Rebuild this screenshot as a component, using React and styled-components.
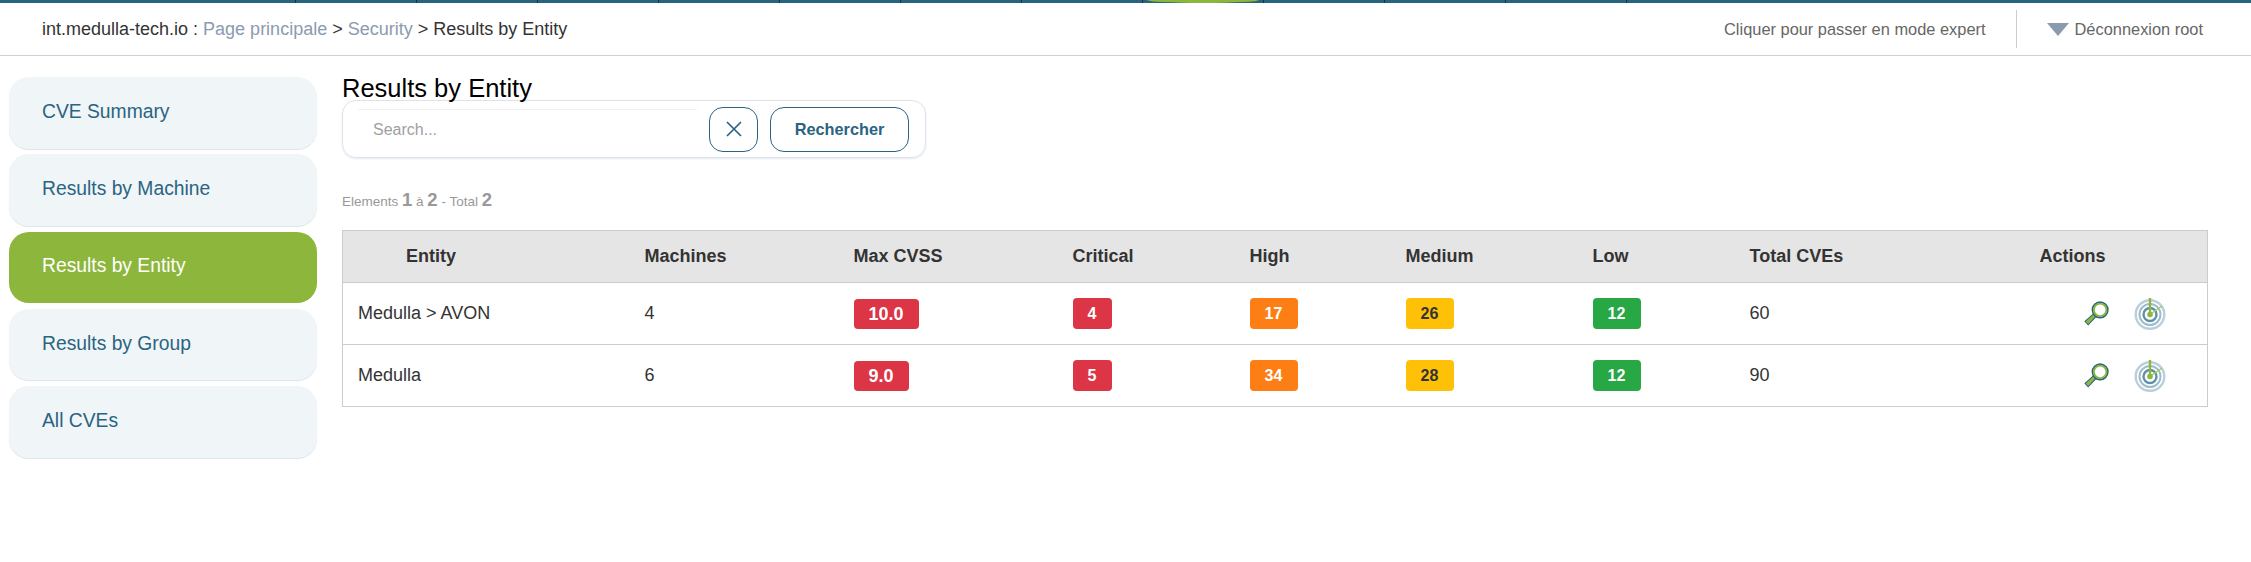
import React from "react";
import styled, { createGlobalStyle } from "styled-components";

const Global = createGlobalStyle`
  html, body { margin: 0; padding: 0; background: #fff; }
  body { font-family: "Liberation Sans", Arial, sans-serif; color: #333; }
`;

const Page = styled.div`
  width: 2251px;
  height: 562px;
  overflow: hidden;
  background: #fff;
`;
const TopBar = styled.nav`
  display: flex;
  height: 3px;
  padding-left: 295px;
  background: #28637f;
`;
const TopTab = styled.div`
  width: 121px;
  height: 3px;
  box-sizing: border-box;
  border-left: 1px solid #1c2f3a;
  display: flex;
  justify-content: center;
  &:last-child { width: 1px; }
`;
const TopPill = styled.span`
  width: 112px;
  height: 3px;
  background: #8db63c;
  border-radius: 0 0 50% 50% / 0 0 100% 100%;
`;
const Header = styled.header`
  display: flex;
  align-items: center;
  height: 53px;
  box-sizing: border-box;
  border-bottom: 1px solid #d0d0d0;
  padding: 0 48px 0 42px;
  font-size: 18px;
`;
const Crumbs = styled.div`
  flex: 1;
  color: #333;
`;
const CrumbLink = styled.a`
  color: #8b9bb0;
`;
const HeaderLink = styled.a`
  font-size: 16.4px;
  color: #666;
`;
const HeaderDivider = styled.span`
  width: 1px;
  height: 38px;
  background: #ccc;
  margin: 0 30px;
`;
const Caret = styled.span`
  width: 0;
  height: 0;
  border-left: 11px solid transparent;
  border-right: 11px solid transparent;
  border-top: 13px solid #8a9bad;
  margin-right: 6px;
`;
const Body = styled.div`
  display: flex;
  padding-top: 21px;
`;
const Sidebar = styled.aside`
  width: 308px;
  margin-left: 9px;
  margin-right: 25px;
  display: flex;
  flex-direction: column;
  gap: 5.83px;
  flex: none;
`;
const SideItem = styled.a`
  display: flex;
  align-items: center;
  height: 71.5px;
  box-sizing: border-box;
  padding: 0 33px 2px;
  border-radius: 20px;
  font-size: 19.3px;
  background: ${(p) => (p.$active ? "#8db63c" : "#f0f5f8")};
  color: ${(p) => (p.$active ? "#fff" : "#2a6482")};
  box-shadow: ${(p) => (p.$active ? "none" : "0 1px 1px #dbe5ec")};
`;
const Main = styled.main`
  width: 1865px;
  flex: none;
`;
const Title = styled.h1`
  margin: 0;
  font-size: 25.5px;
  font-weight: 400;
  line-height: 23px;
  color: #000;
`;
const SearchCard = styled.form`
  width: 584px;
  height: 58px;
  box-sizing: border-box;
  display: flex;
  align-items: center;
  gap: 12px;
  padding: 0 15px;
  border: 1px solid #dce3ec;
  border-radius: 14px;
  box-shadow: 0 1px 2px #e4e9ef;
`;
const SearchInput = styled.input`
  width: 339px;
  height: 40px;
  flex: none;
  box-sizing: border-box;
  border: 0;
  border-top: 1px solid #f0f0f0;
  padding: 0 15px;
  font: 16px "Liberation Sans", Arial, sans-serif;
  outline: none;
  &::placeholder { color: #a0a0a0; opacity: 1; }
`;
const OutlineButton = styled.button`
  height: 45px;
  width: ${(p) => p.$w}px;
  flex: none;
  padding: 0;
  display: flex;
  align-items: center;
  justify-content: center;
  background: #fff;
  border: 1px solid #2a6482;
  border-radius: 14px;
  color: #2a6482;
  font: 700 16.3px "Liberation Sans", Arial, sans-serif;
`;
const Count = styled.div`
  margin-top: 31px;
  height: 22px;
  font-size: 13.5px;
  line-height: 22px;
  color: #999;
`;
const CountNum = styled.b`
  font-size: 18.5px;
`;
const Table = styled.table`
  margin-top: 19px;
  width: 1865px;
  table-layout: fixed;
  border-collapse: collapse;
  border: 1px solid #ccc;
  font-size: 18px;
`;
const Th = styled.th`
  height: 52px;
  padding: 0 15px;
  box-sizing: border-box;
  text-align: left;
  background: #e5e5e5;
  color: #333;
  font-weight: 700;
  border-bottom: 1px solid #ccc;
`;
const EntityTh = styled(Th)`
  padding-left: 63px;
`;
const Td = styled.td`
  height: 62px;
  padding: 0 15px;
  box-sizing: border-box;
  color: #333;
  border-bottom: 1px solid #ccc;
`;
const Badge = styled.span`
  display: inline-block;
  box-sizing: border-box;
  min-width: ${(p) => p.$w}px;
  padding: 0 ${(p) => (p.$lg ? 15 : 0)}px;
  height: ${(p) => (p.$lg ? 30 : 31)}px;
  line-height: ${(p) => (p.$lg ? 30 : 31)}px;
  border-radius: 4px;
  text-align: center;
  vertical-align: middle;
  font-weight: 700;
  font-size: ${(p) => (p.$lg ? 18 : 16)}px;
  background: ${(p) => p.$bg};
  color: ${(p) => p.$fg || "#fff"};
`;
const ActionCell = styled.div`
  display: flex;
  align-items: center;
  justify-content: flex-end;
  gap: 25px;
  padding-right: 26px;
`;

const Magnifier = () => (
  <svg width="25" height="25" viewBox="0 0 24 24">
    <path d="M1 19.5 L9.2 12.2 L11.6 14.8 L4 22.8 Z" fill="#8db63c" stroke="#2a6482" strokeWidth="1" />
    <circle cx="15.5" cy="8.5" r="7.4" fill="#fff" stroke="#2a6482" strokeWidth="1.6" />
    <circle cx="15.5" cy="8.5" r="6" fill="none" stroke="#8db63c" strokeWidth="1.8" />
  </svg>
);
const Radar = () => (
  <svg width="32" height="32" viewBox="0 0 32 32">
    <circle cx="16" cy="16.5" r="14.3" fill="none" stroke="#b9cfdb" strokeWidth="2.4" />
    <circle cx="16" cy="16.5" r="10.5" fill="none" stroke="#9dbccc" strokeWidth="2" />
    <circle cx="16" cy="16.5" r="6.5" fill="none" stroke="#5f90aa" strokeWidth="2.4" />
    <path d="M16 16.5 L28 8" stroke="#a9cb63" strokeWidth="1.5" />
    <path d="M16 16.5 V0" stroke="#8db63c" strokeWidth="2.4" />
    <circle cx="16" cy="16.5" r="2.8" fill="#8db63c" />
  </svg>
);
const CloseIcon = () => (
  <svg width="18" height="18" viewBox="0 0 18 18">
    <path d="M2 2 L16 16 M16 2 L2 16" stroke="#2a6482" strokeWidth="1.7" fill="none" />
  </svg>
);

const sides = ["CVE Summary", "Results by Machine", "Results by Entity", "Results by Group", "All CVEs"];
const widths = [287, 209, 219, 177, 156, 187, 157, 290, 183];
const heads = ["Machines", "Max CVSS", "Critical", "High", "Medium", "Low", "Total CVEs", "Actions"];
const rows = [
  { entity: "Medulla > AVON", machines: 4, cvss: "10.0", c: 4, h: 17, m: 26, l: 12, total: 60 },
  { entity: "Medulla", machines: 6, cvss: "9.0", c: 5, h: 34, m: 28, l: 12, total: 90 },
];
const tabs = Array.from({ length: 12 }, (_, i) => i);

export default function App() {
  return (
    <Page>
      <Global />
      <TopBar>
        {tabs.map((i) => (
          <TopTab key={i}>{i === 7 ? <TopPill /> : null}</TopTab>
        ))}
      </TopBar>
      <Header>
        <Crumbs>
          int.medulla-tech.io : <CrumbLink>Page principale</CrumbLink> &gt; <CrumbLink>Security</CrumbLink> &gt; Results by Entity
        </Crumbs>
        <HeaderLink>Cliquer pour passer en mode expert</HeaderLink>
        <HeaderDivider />
        <Caret />
        <HeaderLink>Déconnexion root</HeaderLink>
      </Header>
      <Body>
        <Sidebar>
          {sides.map((s) => (
            <SideItem key={s} $active={s === "Results by Entity"}>{s}</SideItem>
          ))}
        </Sidebar>
        <Main>
          <Title>Results by Entity</Title>
          <SearchCard>
            <SearchInput placeholder="Search..." />
            <OutlineButton type="button" $w={49}><CloseIcon /></OutlineButton>
            <OutlineButton type="button" $w={139}>Rechercher</OutlineButton>
          </SearchCard>
          <Count>
            Elements <CountNum>1</CountNum> à <CountNum>2</CountNum> - Total <CountNum>2</CountNum>
          </Count>
          <Table>
            <colgroup>
              {widths.map((w, i) => <col key={i} width={w} />)}
            </colgroup>
            <thead>
              <tr>
                <EntityTh>Entity</EntityTh>
                {heads.map((h) => <Th key={h}>{h}</Th>)}
              </tr>
            </thead>
            <tbody>
              {rows.map((r) => (
                <tr key={r.entity}>
                  <Td>{r.entity}</Td>
                  <Td>{r.machines}</Td>
                  <Td><Badge $lg $bg="#dc3545">{r.cvss}</Badge></Td>
                  <Td><Badge $w={39} $bg="#dc3545">{r.c}</Badge></Td>
                  <Td><Badge $w={48} $bg="#fd7e14">{r.h}</Badge></Td>
                  <Td><Badge $w={48} $bg="#ffc107" $fg="#333">{r.m}</Badge></Td>
                  <Td><Badge $w={48} $bg="#28a745">{r.l}</Badge></Td>
                  <Td>{r.total}</Td>
                  <Td>
                    <ActionCell>
                      <Magnifier />
                      <Radar />
                    </ActionCell>
                  </Td>
                </tr>
              ))}
            </tbody>
          </Table>
        </Main>
      </Body>
    </Page>
  );
}
